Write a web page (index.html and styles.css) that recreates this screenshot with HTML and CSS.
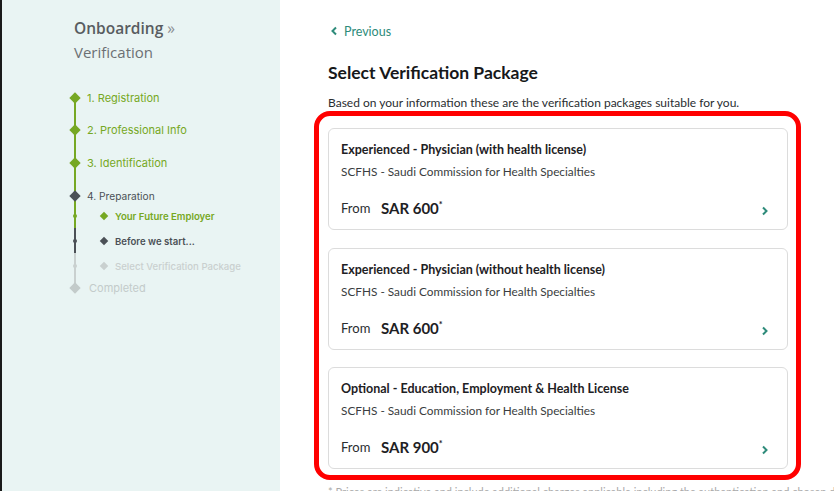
FILE: index.html
```html
<!DOCTYPE html>
<html>
<head>
<meta charset="utf-8">
<link rel="stylesheet" href="styles.css">
</head>
<body>
<div class="page">
  <aside class="sidebar">
    <div class="crumb">
      <div class="crumb-top">Onboarding <span class="raquo">»</span></div>
      <div class="crumb-sub">Verification</div>
    </div>
    <ul class="steps">
      <li class="step done s1"><span class="dia"></span>1. Registration</li>
      <li class="step done s2"><span class="dia"></span>2. Professional Info</li>
      <li class="step done s3"><span class="dia"></span>3. Identification</li>
      <li class="step current s4"><span class="dia"></span>4. Preparation</li>
      <li class="sub done s5"><span class="dot"></span><span class="sdia"></span>Your Future Employer</li>
      <li class="sub active s6"><span class="dot"></span><span class="sdia"></span>Before we start...</li>
      <li class="sub todo s7"><span class="dot"></span><span class="sdia"></span>Select Verification Package</li>
      <li class="step last s8"><span class="dia"></span>Completed</li>
    </ul>
  </aside>
  <main class="main">
    <a class="prev" href="#"><svg width="8" height="10" viewBox="0 0 8 10"><path d="M6 1.5 L2.5 5 L6 8.5" fill="none" stroke="#2e8b7a" stroke-width="2"/></svg>Previous</a>
    <h1 class="title">Select Verification Package</h1>
    <p class="desc">Based on your information these are the verification packages suitable for you.</p>
    <div class="packages">
      <div class="highlight"></div>
      <div class="card">
        <div class="card-title">Experienced - Physician (with health license)</div>
        <div class="card-sub">SCFHS - Saudi Commission for Health Specialties</div>
        <div class="card-price"><span class="from">From</span><span class="amount">SAR 600<sup>*</sup></span><svg class="chev" width="8" height="10" viewBox="0 0 8 10"><path d="M2 1.5 L5.5 5 L2 8.5" fill="none" stroke="#2e8b7a" stroke-width="2"/></svg></div>
      </div>
      <div class="card">
        <div class="card-title">Experienced - Physician (without health license)</div>
        <div class="card-sub">SCFHS - Saudi Commission for Health Specialties</div>
        <div class="card-price"><span class="from">From</span><span class="amount">SAR 600<sup>*</sup></span><svg class="chev" width="8" height="10" viewBox="0 0 8 10"><path d="M2 1.5 L5.5 5 L2 8.5" fill="none" stroke="#2e8b7a" stroke-width="2"/></svg></div>
      </div>
      <div class="card">
        <div class="card-title">Optional - Education, Employment &amp; Health License</div>
        <div class="card-sub">SCFHS - Saudi Commission for Health Specialties</div>
        <div class="card-price"><span class="from">From</span><span class="amount">SAR 900<sup>*</sup></span><svg class="chev" width="8" height="10" viewBox="0 0 8 10"><path d="M2 1.5 L5.5 5 L2 8.5" fill="none" stroke="#2e8b7a" stroke-width="2"/></svg></div>
      </div>
    </div>
    <p class="note">* Prices are indicative and include additional charges applicable including the authentication and chosen delivery options.</p>
  </main>
  <div class="scroll"></div>
</div>
</body>
</html>
```
FILE: styles.css
```css
* { box-sizing: border-box; }
html, body { margin: 0; padding: 0; background: #fff; }
body { font-family: Lato, "Open Sans", sans-serif; overflow: hidden; }
.page { display: flex; height: 491px; border-left: 2px solid #1a1a1a; overflow: hidden; }

.sidebar { width: 278px; flex: none; background: #e9f4f3; padding: 17px 0 0 72px; font-family: Inter, sans-serif; }
.crumb-top { font-family: "Open Sans", sans-serif; font-size: 15.5px; font-weight: 600; color: #585c60; line-height: 22px; }
.raquo { font-weight: 400; color: #8a8e92; }
.crumb-sub { font-family: "Open Sans", sans-serif; font-size: 15px; color: #6c7074; line-height: 22px; margin-top: 2px; }

.steps { list-style: none; margin: 25px 0 0; padding: 0; position: relative; }
.steps::before { content: ""; position: absolute; left: 0; top: 10px; width: 2px; height: 155px; background: linear-gradient(#76a823 0 130px, #4b5056 130px 155px); }
.steps::after { content: ""; position: absolute; left: 0; top: 165px; width: 2px; height: 35px; background: #c9d0cf; }
.step, .sub { position: relative; display: flex; align-items: center; height: 20px; }
.step { padding-left: 13px; font-size: 11px; color: #76a823; }
.s2 { margin-top: 12px; }
.s3 { margin-top: 13px; }
.s4 { margin-top: 13px; }
.s6, .s7 { margin-top: 5px; }
.s8 { margin-top: 2px; }
.dia { position: absolute; left: -3px; top: 50%; width: 8px; height: 8px; margin-top: -4px; transform: rotate(45deg); background: currentColor; z-index: 1; }
.step.current { color: #4b5056; font-size: 10.2px; }
.step.last { color: #c3cbca; font-size: 11px; padding-left: 15px; }
.sub { padding-left: 41px; font-size: 9.6px; font-weight: 600; }
.sub .dot { position: absolute; left: -1px; top: 50%; margin-top: -2px; width: 4px; height: 4px; border-radius: 50%; background: currentColor; }
.sub .sdia { position: absolute; left: 27px; top: 50%; margin-top: -3px; width: 6px; height: 6px; transform: rotate(45deg); background: currentColor; }
.sub.done { color: #76a823; }
.sub.active { color: #4b5056; }
.sub.todo { color: #c9d0cf; font-weight: 500; }

.main { flex: 1; padding: 22px 0 0 48px; font-family: Lato, sans-serif; color: #1e2124; }
.prev { display: flex; align-items: center; gap: 6px; color: #2e8b7a; text-decoration: none; font-size: 12.5px; height: 18px; padding-left: 2px; }
.title { margin: 22px 0 0; font-size: 17.5px; font-weight: 700; line-height: 22px; color: #16181a; }
.desc { margin: 11px 0 0; font-size: 12px; color: #2a2d30; line-height: 16px; }
.packages { position: relative; margin: 17px 0 0; width: 460px; display: flex; flex-direction: column; gap: 17.5px; }
.highlight { position: absolute; top: -17px; left: -14px; right: -13px; bottom: -11px; border: 5px solid #ff0000; border-radius: 16px; pointer-events: none; }
.card { height: 102px; border: 1px solid #dcdcdc; border-radius: 6px; padding: 13px 12px 0 12px; }
.card-title { font-size: 12.5px; font-weight: 700; color: #1e2124; line-height: 16px; }
.card-sub { font-size: 11.8px; color: #3a3d40; line-height: 16px; margin-top: 6px; }
.card-price { display: flex; align-items: center; margin-top: 17px; height: 22px; }
.from { font-size: 13px; color: #2a2d30; width: 40px; }
.amount { font-size: 15px; font-weight: 700; color: #1e2124; }
.amount sup { font-size: 9px; }
.chev { margin-left: auto; margin-right: 6px; margin-top: 6px; }
.note { margin: 16px 0 0; font-size: 11px; color: #aaa; white-space: nowrap; }
.scroll { width: 2px; flex: none; margin: 70px 1px 0 0; background: #9a9a9a; }
```
